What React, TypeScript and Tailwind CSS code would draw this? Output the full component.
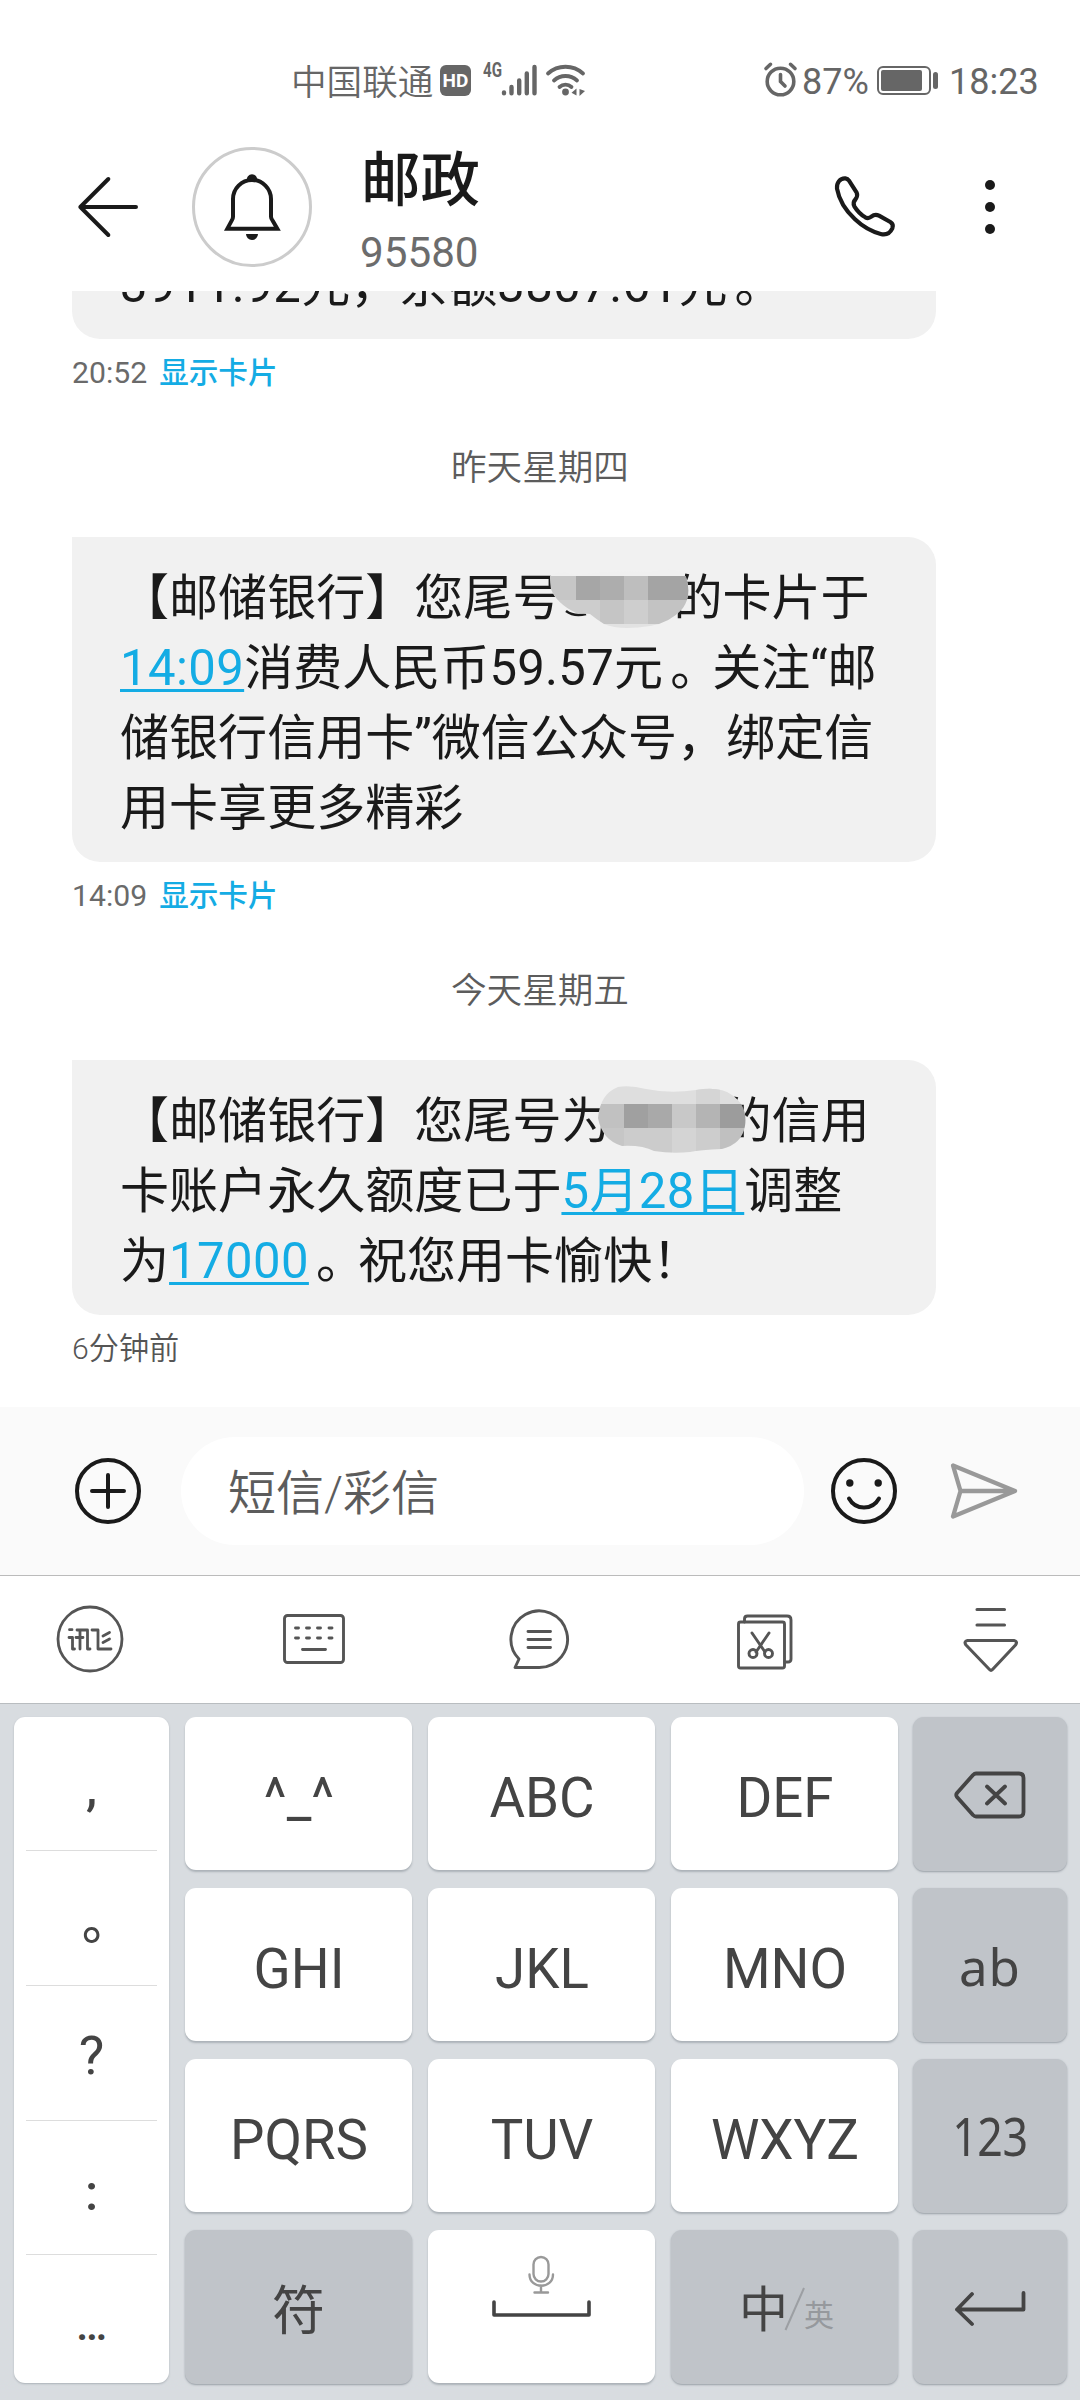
import type { ReactNode } from "react";

const LATIN_CJK = "font-['Roboto','Noto_Sans_CJK_SC',sans-serif]";

/* ---------- status bar ---------- */

function StatusBar() {
  return (
    <div className="flex h-[130px] items-start text-[36px] leading-[42px] text-[#666]">
      <div className="mt-[60px] ml-[291px] flex w-[320px] items-start">
        <span className="mt-[2px] w-[149px] text-[35.6px] font-[350]">中国联通</span>
        <span className="mt-[5px] flex h-[31px] w-[31px] items-center justify-center rounded-[6px] bg-[#666] text-[19px] font-bold text-white">
          HD
        </span>
        <span className="mt-[2px] ml-[12px] block w-[18px] origin-left scale-x-[0.72] text-[21px] leading-[16px] font-bold">4G</span>
        <svg className="mt-[2px] h-[35px] w-[37px]" viewBox="0 0 37 35" fill="none" stroke="#666" strokeWidth="4.4" strokeLinecap="round">
          <path d="M3 30.5v.8M10.500 25v6.3M18.200 18.5v12.8M25.800 11.5v19.8M33.500 5v26.3" />
        </svg>
        <svg className="mt-[2px] ml-[7px] h-[36px] w-[42px]" viewBox="0 0 42 36" fill="none" stroke="#666" strokeWidth="3.8" strokeLinecap="round">
          <path d="M3 11.5a26 26 0 0 1 35 0M9 18.5a17 17 0 0 1 23 0M14.5 25a9 9 0 0 1 12 0" />
          <circle cx="20.5" cy="30" r="3.4" fill="#666" stroke="none" />
          <path d="M31.500 26.500v7l-5-2.800zM34.500 27l5.500 2-5.500 5z" fill="#666" stroke="none" />
        </svg>
      </div>
      <div className="mt-[61px] ml-[152px] flex items-start">
        <svg className="h-[36px] w-[36px]" viewBox="0 0 36 36" fill="none" stroke="#666" strokeWidth="3.6" strokeLinecap="round">
          <circle cx="17.500" cy="20.500" r="13.300" />
          <path d="M17.500 13.500v7l4.500 4.500M3 7.500l4.500-4.200M32 7.500l-4.500-4.200" />
        </svg>
        <span className="ml-[3px] w-[75px]">87%</span>
        <span className="mt-[5px] flex h-[29px] w-[54px] rounded-[6px] border-2 border-[#666] p-[2px]">
          <span className="w-[41px] rounded-[2px] bg-[#666]" />
        </span>
        <span className="mt-[11px] ml-[2px] h-[17px] w-[5px] rounded-[3px] bg-[#666]" />
        <span className="ml-[11px]">18:23</span>
      </div>
    </div>
  );
}

/* ---------- conversation header ---------- */

function Header() {
  return (
    <header className="flex h-[161px] shrink-0 items-start">
      <svg className="mt-[45px] ml-[77px] h-[64px] w-[62px]" viewBox="111 135 186 192" fill="none" stroke="#1a1a1a" strokeWidth="12" strokeLinecap="round" strokeLinejoin="round">
        <path d="M205 147L121 231l84 84M121 231h167" />
      </svg>
      <div className="mt-[17px] ml-[53px] h-[120px] w-[120px] rounded-full border-[3px] border-[#ccc]">
        <svg className="-mt-[3px] -ml-[3px] h-[120px] w-[120px]" viewBox="0 0 360 360" fill="none" stroke="#1a1a1a" strokeWidth="12">
          <path d="M106 245h150l-14-24q-5-6-5-12v-53a57 57 0 0 0-114 0v53q0 6-4 12z" />
          <path d="M165 101a15.500 15.500 0 1 1 30 0zM162 261h36a18 18 0 0 1-36 0z" fill="#1a1a1a" stroke="none" />
        </svg>
      </div>
      <div className="ml-[49px] flex w-[469px] flex-col">
        <h1 className="mt-[15px] text-[59.5px] leading-[72px] font-medium text-[#1a1a1a]">邮政</h1>
        <span className="mt-[11px] -ml-[1px] text-[42.2px] leading-[50px] text-[#6c6c6c]">95580</span>
      </div>
      <svg className="mt-[42px] h-[70px] w-[70px]" viewBox="150 95 210 210" fill="none" stroke="#1a1a1a" strokeWidth="12.500" strokeLinejoin="round">
        <path d="M171 145C169 128 180 113 196 114Q203 115 207 121L230 157Q234 166 227 176Q217 187 223 198Q236 219 256 231Q265 236 274 229Q285 220 297 226L331 245Q342 252 337 264Q326 287 302 281Q260 270 225 237Q180 195 171 145Z" />
      </svg>
      <div className="mt-[50px] ml-[85px] flex flex-col gap-[12px]">
        <span className="h-[10px] w-[10px] rounded-full bg-[#1a1a1a]" />
        <span className="h-[10px] w-[10px] rounded-full bg-[#1a1a1a]" />
        <span className="h-[10px] w-[10px] rounded-full bg-[#1a1a1a]" />
      </div>
    </header>
  );
}

/* ---------- messages ---------- */

function Link({ children }: { children: ReactNode }) {
  return (
    <span className="tracking-[0.4px] text-[#14ace4] underline decoration-[2.500px] underline-offset-[4px] [text-decoration-skip-ink:none]">
      {children}
    </span>
  );
}

function Stop() {
  return <span className="inline-block w-[49px] pl-[7px]">。</span>;
}

function Bubble({ children }: { children: ReactNode }) {
  return (
    <div className="relative w-[864px] shrink-0 rounded-[28px] rounded-tl-none bg-[#f1f1f1] pt-[26px] pb-[19px] pl-[48px] text-[49.05px] leading-[70px] whitespace-nowrap text-[#1a1a1a]">
      {children}
    </div>
  );
}

function Line({ children }: { children: ReactNode }) {
  return <p className="h-[70px]">{children}</p>;
}

function Stamp({ time, card }: { time: string; card?: boolean }) {
  return (
    <div className="flex h-[68px] shrink-0 items-center gap-[12px] text-[30.2px] leading-[36px] font-[350] text-[#555]">
      <span className={card ? "font-normal text-[#6a6a6a]" : ""}>{time}</span>
      {card && <span className="text-[29.6px] font-medium text-[#14ace4]">显示卡片</span>}
    </div>
  );
}

function DayLabel({ children }: { children: ReactNode }) {
  return (
    <div className="-ml-[72px] flex h-[130px] w-[1080px] shrink-0 items-center justify-center pb-[6px] text-[35.6px] font-[350] text-[#5c5c5c]">
      {children}
    </div>
  );
}

function HiddenDigits() {
  return <span className="inline-block w-[112px]" />;
}

function MosaicA() {
  return (
    <svg className="absolute top-[28px] left-[478px] h-[64px] w-[140px]" viewBox="0 0 140 64">
      <clipPath id="maskA">
        <path d="M0 11Q8 4 26 10Q60 5 100 7Q128 0 136 12Q142 30 133 43Q120 58 100 61Q70 66 54 59Q46 54 40 49L26 48Q6 38 1 24Z" />
      </clipPath>
      <path d="M16 46q8 6 20 3" fill="none" stroke="#1a1a1a" strokeWidth="2.500" />
      <g clipPath="url(#maskA)" shapeRendering="crispEdges">
        <rect width="140" height="64" fill="#f0f0f0" />
        <rect x="0" y="11" width="26" height="24" fill="#c6c6c6" />
        <rect x="26" y="11" width="24" height="24" fill="#a6a6a6" />
        <rect x="50" y="11" width="24" height="24" fill="#adadad" />
        <rect x="74" y="11" width="24" height="24" fill="#bebebe" />
        <rect x="98" y="11" width="42" height="24" fill="#a4a4a4" />
        <rect x="0" y="35" width="50" height="24" fill="#cdcdcd" />
        <rect x="50" y="35" width="24" height="24" fill="#c5c5c5" />
        <rect x="74" y="35" width="24" height="24" fill="#cecece" />
        <rect x="98" y="35" width="42" height="24" fill="#c3c3c3" />
        <rect x="0" y="59" width="140" height="5" fill="#e2e2e2" />
      </g>
    </svg>
  );
}

function MosaicB() {
  return (
    <svg className="absolute top-[26px] left-[526px] h-[67px] w-[148px]" viewBox="0 0 148 67">
      <clipPath id="maskB">
        <path d="M0 32Q2 8 20 1Q32 -1 48 3Q72 8 98 4Q122 0 134 9Q150 20 147 40Q144 58 124 63Q102 64 92 66Q74 68 56 65Q44 59 24 60Q4 54 0 32Z" />
      </clipPath>
      <g clipPath="url(#maskB)" shapeRendering="crispEdges">
        <rect width="148" height="18" fill="#dedede" />
        <rect x="98" width="24" height="18" fill="#d5d5d5" />
        <rect x="0" y="18" width="26" height="24" fill="#c1c1c1" />
        <rect x="26" y="18" width="24" height="24" fill="#a0a0a0" />
        <rect x="50" y="18" width="24" height="24" fill="#a9a9a9" />
        <rect x="74" y="18" width="24" height="24" fill="#c8c8c8" />
        <rect x="98" y="18" width="24" height="24" fill="#b4b4b4" />
        <rect x="122" y="18" width="26" height="24" fill="#9c9c9c" />
        <rect x="0" y="42" width="26" height="25" fill="#c6c6c6" />
        <rect x="26" y="42" width="48" height="25" fill="#cccccc" />
        <rect x="74" y="42" width="24" height="25" fill="#d4d4d4" />
        <rect x="98" y="42" width="24" height="25" fill="#cdcdcd" />
        <rect x="122" y="42" width="26" height="25" fill="#c0c0c0" />
      </g>
    </svg>
  );
}

function Messages() {
  return (
    <main className="flex h-[1116px] shrink-0 flex-col justify-end overflow-hidden pb-[24px] pl-[72px]">
      <Bubble>
        <Line>
          <span className="tracking-[0.4px]">3911.92</span>元，余额<span className="tracking-[0.4px]">3807.61</span>元<Stop />
        </Line>
      </Bubble>
      <Stamp time="20:52" card />
      <DayLabel>昨天星期四</DayLabel>
      <Bubble>
        <Line>
          【邮储银行】您尾号
          <HiddenDigits />
          的卡片于
        </Line>
        <Line>
          <Link>14:09</Link>消费人民币<span className="tracking-[0.3px]">59.57</span>元<Stop />关注“邮
        </Line>
        <Line>储银行信用卡”微信公众号，绑定信</Line>
        <Line>用卡享更多精彩</Line>
        <MosaicA />
      </Bubble>
      <Stamp time="14:09" card />
      <DayLabel>今天星期五</DayLabel>
      <Bubble>
        <Line>
          【邮储银行】您尾号为
          <HiddenDigits />
          的信用
        </Line>
        <Line>
          卡账户永久额度已于<Link>5月28日</Link>调整
        </Line>
        <Line>
          为<Link>17000</Link>
          <Stop />祝您用卡愉快！
        </Line>
        <MosaicB />
      </Bubble>
      <Stamp time="6分钟前" />
    </main>
  );
}

/* ---------- compose bar ---------- */

function ComposeBar() {
  return (
    <div className="flex h-[169px] shrink-0 items-start border-b border-[#bbb] bg-[#fafafa] pt-[30px]">
      <svg className="mt-[21px] ml-[75px] h-[66px] w-[66px]" viewBox="0 0 66 66" fill="none" stroke="#1a1a1a" strokeWidth="4" strokeLinecap="round">
        <circle cx="33" cy="33" r="31" />
        <path d="M33 17v32M17 33h32" />
      </svg>
      <div className="ml-[40px] flex h-[108px] w-[623px] items-center rounded-full bg-white pt-[5px] pl-[47px] text-[48px] leading-[56px] font-[350] text-[#5c5c5c]">
        短信/彩信
      </div>
      <svg className="mt-[21px] ml-[27px] h-[66px] w-[66px]" viewBox="0 0 66 66" fill="none" stroke="#1a1a1a" strokeWidth="4" strokeLinecap="round">
        <circle cx="33" cy="33" r="31" />
        <path d="M18 40.500q5 9 15 9t15-9" />
        <circle cx="18.800" cy="25" r="3.700" fill="#1a1a1a" stroke="none" />
        <circle cx="47.200" cy="25" r="3.700" fill="#1a1a1a" stroke="none" />
      </svg>
      <svg className="mt-[25px] ml-[52px] h-[58px] w-[70px]" viewBox="0 0 70 58" fill="none" stroke="#999" strokeWidth="4.300" strokeLinecap="round" strokeLinejoin="round">
        <path d="M4 3.500L66 29L4 54.500L11.500 29zM11.500 29H66" />
      </svg>
    </div>
  );
}

/* ---------- keyboard ---------- */

function Toolbar() {
  return (
    <div className="flex h-[128px] shrink-0 items-start border-b border-[#b9bdc0] bg-white">
      <svg className="mt-[29px] ml-[56px] h-[68px] w-[68px]" viewBox="56 1605 68 68" fill="none" stroke="#555" strokeWidth="2.800" strokeLinecap="round" strokeLinejoin="round">
        <circle cx="90" cy="1639" r="32" />
        <path d="M69.500 1629.700h2.500M69 1637.500h3.500v11.500h2M77 1630h10.500v19h2.500M80 1630v19M76 1637.500h7M92 1630h6v19h13M103 1636l6.500-3.500M103 1642.500l6.500-3.500" />
      </svg>
      <svg className="mt-[37px] ml-[158px] h-[52px] w-[64px]" viewBox="0 0 64 52" fill="none" stroke="#555" strokeWidth="2.900" strokeLinecap="round">
        <rect x="2.500" y="2.500" width="59" height="47" rx="3" />
        <path d="M13.500 15h3M24.500 15h3M35.500 15h3M47 15h3M13.500 25h3M24.500 25h3M35.500 25h3M47 25h3M20.500 36.500h23" />
      </svg>
      <svg className="mt-[33px] ml-[162px] h-[62px] w-[62px]" viewBox="508 1609 62 62" fill="none" stroke="#555" strokeWidth="2.900" strokeLinecap="round" strokeLinejoin="round">
        <path d="M539 1667.500h-24l4-8.500a28.300 28.300 0 1 1 20 8.500z" />
        <path d="M528 1631.500h22.500M528 1639.500h22.500M528 1647.500h22.500" />
      </svg>
      <svg className="mt-[37px] ml-[166px] h-[58px] w-[58px]" viewBox="0 0 58 58" fill="none" stroke="#555" strokeWidth="2.900" strokeLinecap="round" strokeLinejoin="round">
        <rect x="2.500" y="9" width="46" height="46" rx="2" />
        <path d="M8.500 9V6q0-3 3-3H51q4 0 4 4v39q0 3-3 3h-3M16 20l13 19M33 20L20 39" />
        <circle cx="17" cy="40.500" r="4" />
        <circle cx="32.500" cy="40.500" r="4" />
      </svg>
      <svg className="mt-[29px] ml-[167px] h-[68px] w-[60px]" viewBox="0 0 60 68" fill="none" stroke="#555" strokeWidth="3.100" strokeLinecap="round" strokeLinejoin="round">
        <path d="M16 4.500h27.500M16 20h27.500M6.500 35.500h46.500q4 1 1.500 4.500L31.500 64.500q-1.500 1.500-3 0L5 40Q2.500 36.500 6.500 35.500z" />
      </svg>
    </div>
  );
}

const WHITE_KEY =
  "flex h-[153px] items-center justify-center rounded-[11px] bg-white pt-[8px] pl-[1px] text-[54.6px] leading-[64px] text-[#444] shadow-[0_2px_2px_rgba(90,100,110,0.35)]";
const GRAY_KEY =
  "flex h-[154px] items-center justify-center rounded-[11px] bg-[#c0c4c9] text-[#444] shadow-[0_1px_2px_rgba(90,100,110,0.5)]";

function PunctuationColumn() {
  return (
    <div className="flex h-[666px] w-[155px] flex-col rounded-[11px] bg-white px-[12px] text-center text-[54px] text-[#444] shadow-[0_1px_2px_rgba(90,100,110,0.35)]">
      <span className="h-[134px] border-b border-[#ddd] pt-[39px] text-[50px] leading-[64px] font-medium">,</span>
      <span className="h-[135px] border-b border-[#ddd] pt-[49px] font-['Noto_Sans_CJK_TC',sans-serif] text-[50px] leading-[64px] font-medium">。</span>
      <span className="h-[135px] border-b border-[#ddd] pt-[38px] leading-[64px]">?</span>
      <span className="h-[134px] border-b border-[#ddd] pt-[40px] text-[50px] leading-[64px] font-medium">:</span>
      <span className="h-[128px] pt-[38px] text-[44px] leading-[64px] font-medium">…</span>
    </div>
  );
}

function Keyboard() {
  return (
    <div className="flex h-[696px] shrink-0 items-start bg-[#d8dce0] pt-[13px] pl-[14px]">
      <PunctuationColumn />
      <div className="ml-[16px] grid grid-cols-[227px_227px_227px] gap-x-[16px] gap-y-[18px]">
        <button className={WHITE_KEY}>^_^</button>
        <button className={WHITE_KEY}>ABC</button>
        <button className={WHITE_KEY}>DEF</button>
        <button className={WHITE_KEY}>GHI</button>
        <button className={WHITE_KEY}>JKL</button>
        <button className={WHITE_KEY}>MNO</button>
        <button className={WHITE_KEY}>PQRS</button>
        <button className={WHITE_KEY}>TUV</button>
        <button className={WHITE_KEY}>WXYZ</button>
        <button className={GRAY_KEY}>
          <span className="mt-[9px] text-[53px] leading-[64px]">符</span>
        </button>
        <button className="flex h-[153px] items-start justify-center rounded-[11px] bg-white pt-[23px] shadow-[0_2px_2px_rgba(90,100,110,0.35)]">
          <svg className="mt-0 h-[66px] w-[104px]" viewBox="0 0 104 66" fill="none" strokeLinecap="round" strokeLinejoin="round">
            <path d="M4 49v13h95V49" stroke="#444" strokeWidth="3.600" />
            <g stroke="#999" strokeWidth="2.400">
              <rect x="43.500" y="4" width="15" height="24.500" rx="7.500" />
              <path d="M39.500 21.500c0 15 23.500 15 23.500 0M51 32.500v6.500M44.500 39.500h13.500" />
            </g>
          </svg>
        </button>
        <button className={GRAY_KEY}>
          <span className="mt-[7px] ml-[4px] text-[49px] leading-[64px]">中</span>
          <svg className="mt-[3px] -ml-[4px] h-[44px] w-[22px]" viewBox="0 0 22 44" stroke="#9c9fa3" strokeWidth="2">
            <path d="M1.500 43L20 1" />
          </svg>
          <span className="mt-[17px] -ml-[2px] text-[30px] leading-[40px] text-[#96999d]">英</span>
        </button>
      </div>
      <div className="ml-[15px] flex w-[154px] flex-col gap-[17px]">
        <button className={GRAY_KEY}>
          <svg className="mt-[1px] h-[48px] w-[72px]" viewBox="0 0 72 48" fill="none" stroke="#444" strokeWidth="3.800" strokeLinecap="round" strokeLinejoin="round">
            <path d="M22 2.500h43q4.500 0 4.500 4.500v34q0 4.500-4.500 4.500H22q-1.500 0-3-1.500L3 26q-1.500-2 0-4L19 4q1.500-1.500 3-1.500zM33 15.500l18 17M51 15.500l-18 17" />
          </svg>
        </button>
        <button className={GRAY_KEY}>
          <span className="mt-[2px] font-['Noto_Sans',sans-serif] text-[51px] leading-[64px] tracking-[1px]">ab</span>
        </button>
        <button className={GRAY_KEY}>
          <span className="scale-x-[0.86] font-['Noto_Sans',sans-serif] text-[52px] leading-[64px] tracking-[-0.5px]">123</span>
        </button>
        <button className={GRAY_KEY}>
          <svg className="mt-[4px] h-[40px] w-[72px]" viewBox="0 0 72 40" fill="none" stroke="#444" strokeWidth="3.800" strokeLinecap="round" strokeLinejoin="round">
            <path d="M18 5L3 20.500L18 35M3 20.500h66.500V4" />
          </svg>
        </button>
      </div>
    </div>
  );
}

export default function App() {
  return (
    <div className={`${LATIN_CJK} flex h-[2400px] w-[1080px] flex-col overflow-hidden bg-white`}>
      <StatusBar />
      <Header />
      <Messages />
      <ComposeBar />
      <Toolbar />
      <Keyboard />
    </div>
  );
}
